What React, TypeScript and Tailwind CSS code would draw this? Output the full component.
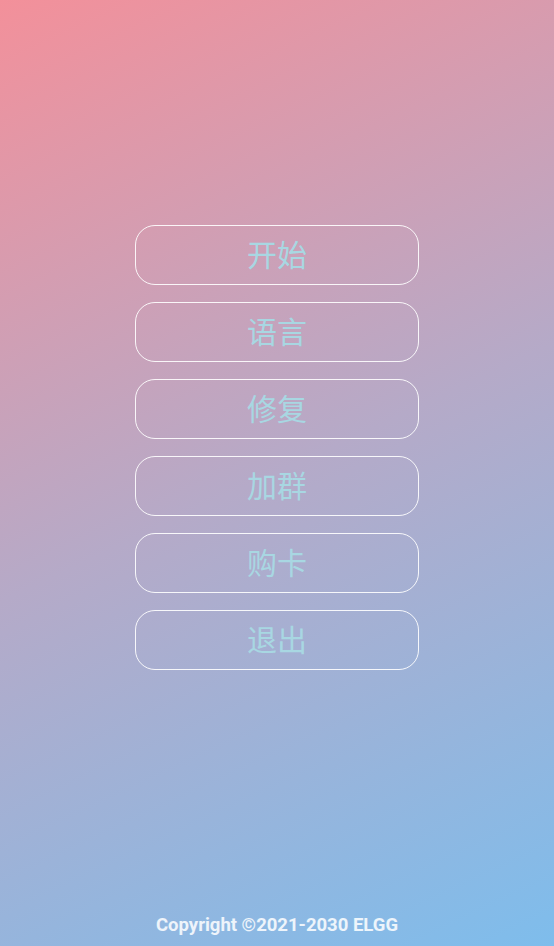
const items = ["开始", "语言", "修复", "加群", "购卡", "退出"];

export default function App() {
  return (
    <div className="flex h-[946px] w-full flex-col items-center bg-[linear-gradient(155deg,#f3909a_0%,#b5aac8_50%,#7ebdec_100%)] font-['Roboto','Noto_Sans_CJK_SC',sans-serif]">
      <div className="mt-[225px] flex w-[284px] flex-col gap-[17px]">
        {items.map((t) => (
          <button
            key={t}
            className="flex h-[60px] w-full items-center justify-center rounded-[20px] border-[1.5px] border-white/90 text-[30px] text-[#a8d7e2]"
          >
            {t}
          </button>
        ))}
      </div>
      <div className="mt-auto pb-[6px] text-[18.5px] font-bold text-white/85">
        Copyright ©2021-2030 ELGG
      </div>
    </div>
  );
}
